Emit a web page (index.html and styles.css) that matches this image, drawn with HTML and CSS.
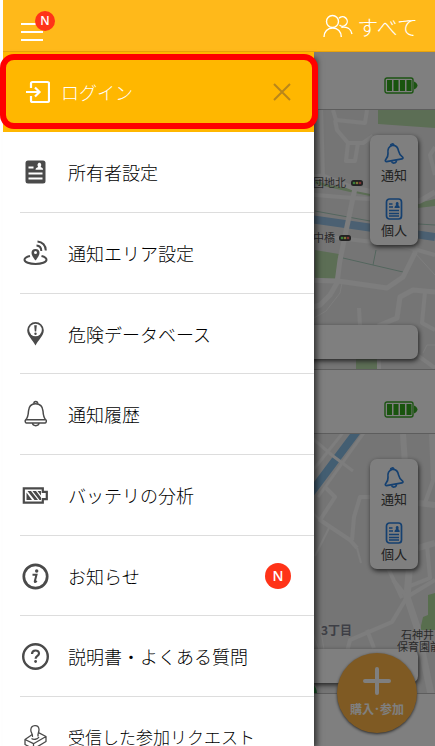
FILE: index.html
```html
<!DOCTYPE html>
<html lang="ja">
<head>
  <meta charset="UTF-8">
  <meta name="viewport" content="width=device-width, initial-scale=1.0">
  <title>メニュー</title>
  <link rel="stylesheet" href="styles.css">
</head>
<body>
  <!-- shared icons -->
  <svg class="sprite" aria-hidden="true">
    <symbol id="battery" viewBox="0 0 34 18">
      <rect x="1" y="1" width="28" height="15" rx="2" fill="none" stroke="#38a824" stroke-width="1.4"/>
      <path d="M3 3h5v11H3zM9.500 3h5v11h-5zM16 3h5v11h-5zM22.500 3h5v11h-5z" fill="#32a81c"/>
      <path d="M30 4.500c2 1 3.500 2.500 3.500 4s-1.500 3-3.500 4z" fill="#38a824"/>
    </symbol>
    <symbol id="bell-blue" viewBox="0 0 22 22">
      <g fill="none" stroke="#2a80e0" stroke-width="1.700" stroke-linejoin="round">
        <path d="M9 2.500C5.500 3.500 4.500 6.500 5 10.500c.3 3-.8 4.500-2.500 6.500-.5.900 0 1.600 1 1.600L19 15.800c1-.2 1.300-1 .6-1.700-2.300-1.700-3.400-3.100-4-6C14.800 4.200 12.500 2 9 2.500z"/>
        <path d="M7.500 2.800C7.500.600 10.500.300 11 2.400M8.500 18.200c.8 2.800 4.800 2.400 5-1"/>
      </g>
    </symbol>
    <symbol id="card-blue" viewBox="0 0 18 22">
      <g fill="none" stroke="#2a80e0" stroke-width="1.700">
        <rect x="1.500" y="1" width="15" height="20" rx="3"/>
        <path d="M4 6h3.500M4 9h4M4 12.500h10M4 15.500h10M4 18h10" stroke-width="1.300"/>
      </g>
      <path d="M9.500 10c0-2 1-2.500 1.700-2.700-.9-1.300-.5-3.300 1-3.300s1.900 2 1 3.300c.8.2 1.500.7 1.500 2.700z" fill="#2a80e0"/>
    </symbol>
    <symbol id="signal" viewBox="0 0 12 6">
      <rect width="12" height="6" rx="2.500" fill="#444"/>
      <circle cx="3" cy="3" r="1.300" fill="#7f7"/>
      <circle cx="6" cy="3" r="1.300" fill="#fe6"/>
      <circle cx="9" cy="3" r="1.300" fill="#f66"/>
    </symbol>
  </svg>

  <div class="app">
    <header class="topbar">
      <button class="menu-button" type="button" aria-label="メニュー">
        <span class="menu-lines"></span>
        <span class="badge badge-small">N</span>
      </button>
      <button class="group-button" type="button">
        <svg width="30" height="24" viewBox="0 0 30 24" fill="none" stroke="#fff" stroke-width="1.400">
          <circle cx="9.500" cy="7.500" r="6"/>
          <path d="M1 23c0-5.500 3.600-9 8.700-9s8.600 3.500 8.600 9"/>
          <path d="M16 4.300a4.700 4.700 0 1 1 .5 6.700M18.300 13.300c5.600-1 9.700 1.700 10.700 6.700"/>
        </svg>
        すべて
      </button>
    </header>

    <div class="screen">
      <main class="content">
        <section class="device">
          <div class="device-head"><svg width="34" height="18"><use href="#battery"/></svg></div>
          <div class="map">
            <svg class="map-art" width="432" height="260" viewBox="3 110 432 260">
              <g fill="#b8dcaa">
                <path d="M378 110h57v18l-57-4z"/>
                <path d="M315 180l14 5 42 7-1 4-20-4-35-8z"/>
                <path d="M418 203l17-4v7l-17 2z"/>
                <path d="M315 250l24 4-4 28-20-2z"/>
                <path d="M356 358h21v12h-21z"/>
              </g>
              <path d="M303 218l70 10 62 9" stroke="#96c0e4" stroke-width="8" fill="none"/>
              <path d="M315 211l55 10 65 4M343 258l60 14M376 250l-3 15" stroke="#a8ccbc" fill="none"/>
              <g stroke="#fafafa" fill="none" stroke-width="4" stroke-linejoin="round">
                <path d="M303 178l20-2 30 12 67 13 15-9" stroke-width="5"/>
                <path d="M355 188l-15 72-3 23-7 12-10 10-10 3" stroke-width="5"/>
                <path d="M303 194l50 4 67 4M303 234l97 11 35 10"/>
                <path d="M333 110l3 10 29 3 2-13M335 120l2 10 11 13h15l10-7M348 143l-2 18h9l3-18M321 110l2 66"/>
                <path d="M303 280l35 1 49 7 16-11 12-24v-10" stroke-width="5"/>
                <path d="M378 326l19-8 3-21 13-7 22 2" stroke-width="5"/>
                <path d="M425 292l-3 31 13 7M359 308l1 18M417 355l18 13M379 358v12M435 147l-5 8 5 20"/>
                <path d="M342 283l-2 10-14 18-12 7M415 253l20 22M435 345h-8l-4 8" stroke-width="1"/>
              </g>
              <g class="map-label" text-anchor="end">
                <text x="346" y="187">団地北</text>
                <text x="335" y="242">中橋</text>
              </g>
              <use href="#signal" x="351" y="180" width="12" height="6"/>
              <use href="#signal" x="339" y="235" width="12" height="6"/>
            </svg>
            <div class="map-tools">
              <button type="button"><svg width="22" height="22"><use href="#bell-blue"/></svg>通知</button>
              <button type="button"><svg width="18" height="22"><use href="#card-blue"/></svg>個人</button>
            </div>
            <div class="address-bar"></div>
          </div>
        </section>

        <section class="device">
          <div class="device-head"><svg width="34" height="18"><use href="#battery"/></svg></div>
          <div class="map">
            <svg class="map-art" width="432" height="260" viewBox="3 434 432 260">
              <path d="M428 595l7-2v37h-15l3-13 5-2z" fill="#b0dc9c"/>
              <path d="M358 430l-48 64" stroke="#86bce4" stroke-width="8" fill="none"/>
              <g stroke="#fafafa" fill="none" stroke-width="4" stroke-linejoin="round">
                <path d="M366 430l-48 67M345 430l-35 44" stroke-width="3"/>
                <path d="M312 438l21 18 20 15" stroke-width="3"/>
                <path d="M325 487l10 10-15 23 30 20 7 8M352 540l2-23 6-20h12"/>
                <path d="M403 434l4 60M432 434l2 45M418 503l17 2M418 548l17-5" stroke-width="6"/>
                <path d="M435 475l-10 28M427 545l3 33-20 8M388 568l14 30" stroke-width="4"/>
                <path d="M410 560l-3 37 10 30 14 67" stroke-width="7"/>
                <path d="M393 580l14 17 28-17M407 597l-15 25-42 18-3 12M367 630l7 18"/>
                <path d="M330 526l-15 30M357 548l4 15M320 520l-8-8" stroke-width="2"/>
                <path d="M312 630l8 22M320 625l4 25" stroke-width="1"/>
              </g>
              <text class="map-label map-district" x="321" y="635">3丁目</text>
              <circle cx="303" cy="694" r="14" fill="#2fb352"/>
            </svg>
            <div class="map-tools">
              <button type="button"><svg width="22" height="22"><use href="#bell-blue"/></svg>通知</button>
              <button type="button"><svg width="18" height="22"><use href="#card-blue"/></svg>個人</button>
            </div>
            <div class="address-bar"></div>
            <svg class="map-art" width="432" height="260" viewBox="3 434 432 260">
              <g class="map-label">
                <text x="401" y="639">石神井</text>
                <text x="397" y="651">保育園前</text>
              </g>
            </svg>
          </div>
        </section>

        <button class="buy-button" type="button">
          <svg width="28" height="28" viewBox="0 0 28 28"><path d="M14 2v24M2 14h24" stroke="#fff" stroke-width="4" stroke-linecap="round"/></svg>
          購入･参加
        </button>
      </main>

      <div class="scrim"></div>

      <nav class="drawer">
        <div class="login-row">
          <a class="login-link" href="#login">
            <svg width="24" height="24" viewBox="0 0 24 24" fill="none" stroke="#fff" stroke-width="2.200">
              <path d="M5 8V3.500a1.500 1.500 0 0 1 1.500-1.500h15A1.500 1.500 0 0 1 23 3.500v17a1.500 1.500 0 0 1-1.500 1.500h-15A1.500 1.500 0 0 1 5 20.500V16"/>
              <path d="M0 12h13M9 7.500l4.500 4.500L9 16.500"/>
            </svg>
            ログイン
          </a>
          <button class="close-button" type="button" aria-label="閉じる">
            <svg width="18" height="18" viewBox="0 0 18 18"><path d="M1 1l16 16M17 1L1 17" stroke="#b9861a" stroke-width="2"/></svg>
          </button>
        </div>

        <ul class="menu">
          <li><a href="#owner">
            <svg width="32" height="32" viewBox="0 0 32 32">
              <rect x="5.500" y="4.500" width="20" height="23" rx="2.500" fill="#4a4a4a"/>
              <path d="M8.500 11.500h5M8.500 17.500h14M8.500 22.500h14" stroke="#fff" stroke-width="1.800"/>
              <path d="M15.500 13.800c0-1.800 1.200-2.300 2.700-2.800-1.300-1.800-.6-4.300 1.200-4.300s2.500 2.500 1.200 4.300c1.500.5 2.500 1 2.500 2.800z" fill="#fff"/>
            </svg>
            所有者設定</a></li>
          <li><a href="#area">
            <svg width="32" height="32" viewBox="0 0 32 32" fill="none" stroke="#4a4a4a" stroke-width="2">
              <path d="M10 19c-3.500.8-5.500 2-5.500 3.700 0 2.500 4.900 4.300 11 4.300s11-1.800 11-4.300c0-1.700-2-2.900-5-3.700"/>
              <path d="M15.500 12a4 4 0 0 0-4 4c0 3 4 7.500 4 7.500s4-4.500 4-7.500a4 4 0 0 0-4-4z" fill="#4a4a4a" stroke="none"/>
              <circle cx="15.500" cy="15.500" r="1.500" fill="#fff" stroke="none"/>
              <path d="M16.500 8.500c3 .2 4.800 2.500 4.800 5.500M17.500 4.500c5 .3 8.300 4 8.300 9"/>
            </svg>
            通知エリア設定</a></li>
          <li><a href="#danger">
            <svg width="32" height="32" viewBox="0 0 32 32">
              <path d="M15.500 4a8.300 8.300 0 0 0-8.300 8.300c0 5.500 5.500 9.700 8.300 15.200 2.800-5.500 8.300-9.700 8.300-15.200A8.300 8.300 0 0 0 15.500 4z" fill="#4a4a4a"/>
              <circle cx="15.500" cy="12" r="6.300" fill="#fff"/>
              <path d="M14.200 7.300h2.600l-.6 6.200h-1.400z" fill="#4a4a4a"/>
              <circle cx="15.500" cy="15.800" r="1.200" fill="#4a4a4a"/>
            </svg>
            危険データベース</a></li>
          <li><a href="#history">
            <svg width="32" height="32" viewBox="0 0 32 32" fill="none" stroke="#4a4a4a" stroke-width="1.500" stroke-linejoin="round">
              <path d="M15.500 5.700c-4.500 0-6.700 3.300-7 7.300-.2 4-.7 7-3 9-.7.700-.2 3 .8 3h18.900c1 0 1.500-2.300.8-3-2.300-2-2.800-5-3-9-.3-4-2.500-7.300-7.500-7.300z"/>
              <path d="M6 21.700h19.500M13.800 5.700c0-3 3.900-3 3.900 0M12.500 25c.3 3.500 6.200 3.500 6.500 0"/>
            </svg>
            通知履歴</a></li>
          <li><a href="#battery-report">
            <svg width="32" height="32" viewBox="0 0 32 32">
              <path d="M3.800 9.300h19v3.500h4v7.400h-4v3.500h-19z" fill="none" stroke="#4a4a4a" stroke-width="2.200"/>
              <path d="M6.500 13.500V21H12zM7.500 12h3.500l7 9h-3.500zM12.500 12h3.500l5 6.500V21h-1.500zM17.500 12H21v4.500z" fill="#4a4a4a"/>
            </svg>
            バッテリの分析</a></li>
          <li><a href="#news">
            <svg width="32" height="32" viewBox="0 0 32 32">
              <circle cx="15.500" cy="16.500" r="11.700" fill="none" stroke="#4a4a4a" stroke-width="2.700"/>
              <circle cx="16.700" cy="11" r="1.700" fill="#4a4a4a"/>
              <path d="M12.500 14.800h4l-1.700 6.500c-.2 1 .8.800 2-.2" fill="none" stroke="#4a4a4a" stroke-width="2"/>
            </svg>
            お知らせ <span class="badge">N</span></a></li>
          <li><a href="#help">
            <svg width="32" height="32" viewBox="0 0 32 32">
              <circle cx="15.500" cy="16.500" r="12.300" fill="none" stroke="#4a4a4a" stroke-width="2.400"/>
              <path d="M12 14c0-4.600 7-4.600 7-.5 0 2.500-3.400 2.300-3.400 5.300" fill="none" stroke="#4a4a4a" stroke-width="2.200"/>
              <circle cx="15.600" cy="21.500" r="1.400" fill="#4a4a4a"/>
            </svg>
            説明書・よくある質問</a></li>
          <li><a class="long-label" href="#requests">
            <svg width="32" height="32" viewBox="0 0 32 32" fill="none" stroke="#4a4a4a" stroke-width="1.300" stroke-linejoin="round">
              <path d="M12.500 16c.8-2.500-2-4.500-1.700-7.300C11.200 3.500 18.500 3 19 8.200c.3 3-1.800 4.300-.8 7.300"/>
              <path d="M12.300 13.500L5 18.500v5L13.500 28 26 20.500v-5l-7.500-3.800M5 18.500l8.500 4.200L26 15.500M13.500 22.700V28M11.500 17.500c2 1.500 6 1 7.500-1.500"/>
            </svg>
            受信した参加リクエスト</a></li>
        </ul>
      </nav>
    </div>
  </div>
</body>
</html>
```
FILE: styles.css
```css
* {
  box-sizing: border-box;
}

body {
  margin: 0;
  font-family: "Noto Sans CJK JP", sans-serif;
  font-weight: 300;
  color: #000;
  background: #fff;
}

button {
  border: none;
  background: none;
  padding: 0;
  font-family: inherit;
  font-weight: inherit;
  color: inherit;
  cursor: pointer;
}

a {
  color: inherit;
  text-decoration: none;
}

svg {
  display: block;
  flex: none;
}

.sprite {
  position: absolute;
  width: 0;
  height: 0;
}

.app {
  display: flex;
  flex-direction: column;
  height: 100vh;
  padding-left: 3px;
  overflow: hidden;
}

/* top bar */
.topbar {
  display: flex;
  flex: none;
  justify-content: space-between;
  align-items: center;
  height: 52px;
  padding: 0 17px 0 18px;
  background: #ffb91a;
  border-bottom: 1px solid #e8a20c;
}

.menu-button {
  position: relative;
  padding-top: 12px;
}

.menu-lines {
  display: block;
  width: 22px;
  height: 18px;
  border-top: 2px solid #fff;
  border-bottom: 2px solid #fff;
  background: linear-gradient(#fff, #fff) center / 100% 2px no-repeat;
}

.badge {
  display: flex;
  align-items: center;
  justify-content: center;
  width: 26px;
  height: 26px;
  margin-left: auto;
  border-radius: 50%;
  background: #ff3318;
  color: #fff;
  font: 600 14px/1 "Open Sans", sans-serif;
}

.badge-small {
  position: absolute;
  top: 0;
  left: 14px;
  width: 20px;
  height: 20px;
  font-size: 12px;
}

.group-button {
  display: flex;
  align-items: center;
  gap: 4px;
  color: #fff;
  font-size: 21px;
  line-height: 24px;
}

/* device list behind the drawer */
.screen {
  position: relative;
  flex: 1;
  min-height: 0;
}

.content {
  position: relative;
  height: 100%;
  overflow: hidden;
}

.device-head {
  display: flex;
  justify-content: flex-end;
  align-items: center;
  height: 64px;
  padding-right: 17px;
  padding-top: 16px;
  border-bottom: 1px solid #bbb;
}

.device:first-child .device-head {
  height: 58px;
  padding-top: 10px;
}

.map {
  position: relative;
  height: 260px;
  overflow: hidden;
  background: #ebebeb;
  border-bottom: 1px solid #bbb;
}

.map-art {
  position: absolute;
  top: 0;
  right: 0;
}

.map-label {
  font-size: 11px;
  font-weight: 400;
  fill: #555;
}

.map-district {
  font-size: 12px;
  font-weight: bold;
  fill: #7c7f8c;
}

.map-tools {
  position: absolute;
  top: 25px;
  right: 17px;
  display: flex;
  flex-direction: column;
  gap: 14px;
  width: 48px;
  padding: 8px 0 6px;
  border-radius: 7px;
  background: #fff;
  box-shadow: 1px 2px 5px #444;
}

.map-tools button {
  display: flex;
  flex-direction: column;
  align-items: center;
  font-size: 13px;
  font-weight: 400;
  line-height: 19px;
  color: #444;
}

.address-bar {
  position: absolute;
  left: 17px;
  right: 17px;
  bottom: 10px;
  height: 34px;
  border-radius: 7px;
  background: #fff;
  box-shadow: 1px 2px 5px #444;
}

.buy-button {
  position: absolute;
  right: 18px;
  bottom: 13px;
  display: flex;
  flex-direction: column;
  align-items: center;
  gap: 6px;
  width: 80px;
  height: 80px;
  padding-top: 14px;
  border-radius: 50%;
  background: #ffb446;
  color: #fff;
  font-size: 12px;
  font-weight: bold;
  line-height: 16px;
  box-shadow: 0 1px 3px #555;
}

.scrim {
  position: absolute;
  inset: 0;
  background: rgba(0, 0, 0, 0.5);
}

/* drawer */
.drawer {
  position: absolute;
  top: 0;
  bottom: 0;
  left: 0;
  width: 72%;
  background: #fff;
  box-shadow: 5px 4px 6px -2px rgba(0, 0, 0, 0.6);
}

.login-row {
  position: relative;
  display: flex;
  align-items: center;
  justify-content: space-between;
  height: 80px;
  padding: 0 23px;
  background: #ffb700;
}

.login-row::after {
  content: "";
  position: absolute;
  inset: 2px -4px 3px -3px;
  border: 6px solid #f00;
  border-radius: 14px;
  pointer-events: none;
}

.login-link {
  display: flex;
  align-items: center;
  gap: 11px;
  color: #fff;
  font-size: 18px;
  line-height: 24px;
}

.menu {
  display: grid;
  grid-auto-rows: 81px 81px 80px;
  height: calc(100% - 80px);
  margin: 0;
  padding: 0 0 0 17px;
  overflow: hidden;
  list-style: none;
}

.menu a {
  display: flex;
  align-items: center;
  gap: 16px;
  height: 100%;
  padding-right: 23px;
  border-bottom: 1px solid #ddd;
  font-size: 18px;
  line-height: 24px;
  white-space: nowrap;
}

.menu .long-label {
  font-size: 17px;
}
```
